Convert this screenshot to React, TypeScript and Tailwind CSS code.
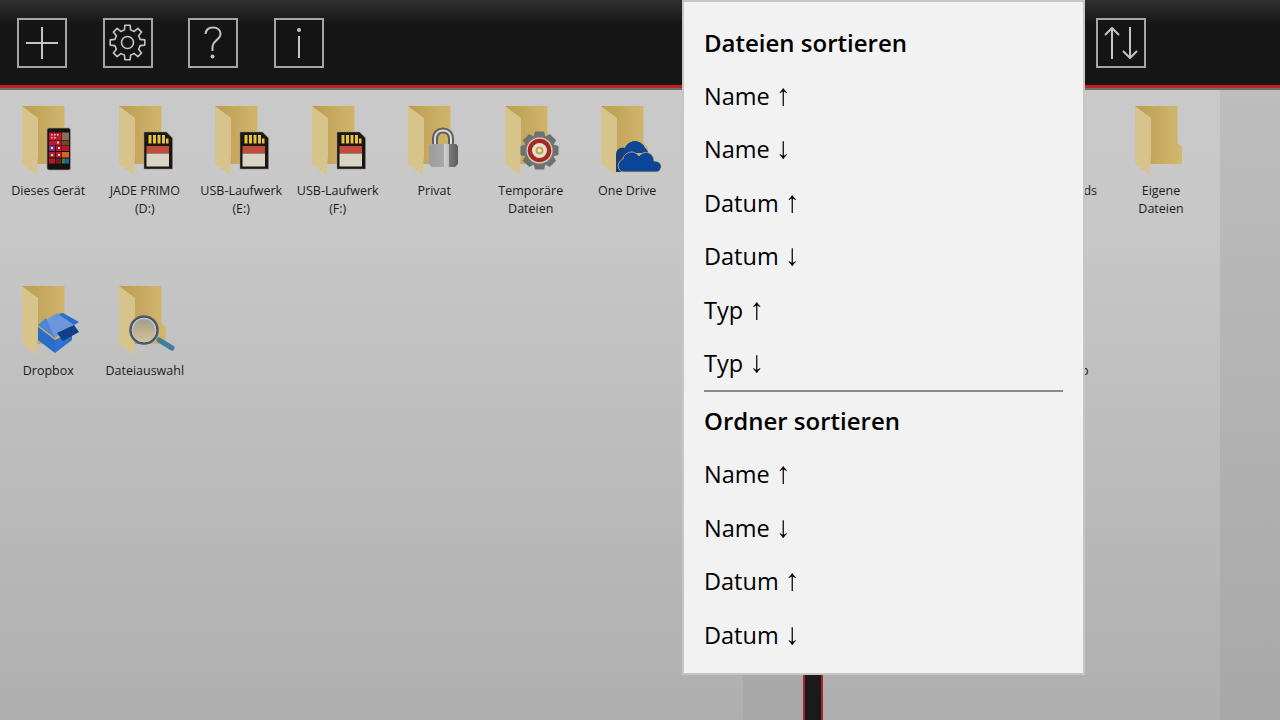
import type { ReactNode } from "react";

const segoe = "font-['Open_Sans',sans-serif]";

function Folder({ id }: { id: string }) {
  return (
    <svg width="47" height="69" viewBox="0 0 47 69" className="block">
      <defs>
        <linearGradient id={id} x1="0" x2="1" y1="0" y2="0">
          <stop offset="0" stopColor="#bc9d4e" />
          <stop offset="0.45" stopColor="#c6a95f" />
          <stop offset="1" stopColor="#d1b86f" />
        </linearGradient>
      </defs>
      <path d="M0 0H42.5V37L47 41V55.5Q47 58 45 58H14Z" fill={`url(#${id})`} />
      <path d="M0 0L16 12V50L14.5 69L0 58Z" fill="#d7c48c" />
    </svg>
  );
}

// overlays use the tile's own coordinates, folder top-left is at 22,0
function Overlay({ children }: { children: ReactNode }) {
  return (
    <svg width="96" height="80" viewBox="0 0 96 80" className="absolute left-0 top-0">
      {children}
    </svg>
  );
}

function Phone() {
  const cells = [
    ["#c2182e", 49, 26.5, 12.5, 7.5], ["#8a6d4f", 62, 26.5, 7, 7.5],
    ["#c2182e", 49, 34.5, 12.5, 4.5], ["#6d4a30", 62, 34.5, 7, 4.5],
    ["#8c2a8c", 49, 39.5, 6, 5.5], ["#c2182e", 56, 39.5, 5.5, 5.5], ["#b5172c", 62, 39.5, 7, 5.5],
    ["#c2182e", 49, 46, 6, 5.5], ["#c2182e", 56, 46, 5.5, 5.5], ["#d8641e", 62, 46, 7, 5.5],
    ["#b5172c", 49, 52.5, 6, 5], ["#7c1a22", 56, 52.5, 5.5, 5], ["#1c8f3c", 62, 52.5, 3.5, 5], ["#1d5fb0", 65.5, 52.5, 3.5, 5],
    ["#f0d8d8", 51, 28, 1.5, 1.5], ["#f0d8d8", 54, 28, 1.5, 1.5], ["#f0d8d8", 57, 28, 1.5, 1.5],
    ["#f0d8d8", 51, 31, 1.5, 1.5], ["#f0d8d8", 54, 31, 1.5, 1.5], ["#f0d8d8", 57, 35.5, 2, 2],
    ["#f0d8d8", 51, 41, 2, 2], ["#f0d8d8", 58, 41, 2, 2], ["#f0d8d8", 51, 48, 2, 2], ["#f0d8d8", 58, 48, 2, 2],
  ] as const;
  return (
    <Overlay>
      <rect x="47" y="22" width="23.5" height="42" rx="2" fill="#15120f" stroke="#9a9a9a" strokeWidth="0.7" />
      {cells.map(([c, x, y, w, h], i) => (
        <rect key={i} x={x} y={y} width={w} height={h} fill={c} />
      ))}
    </Overlay>
  );
}

function SdCard() {
  return (
    <Overlay>
      <path d="M47 26H69.5L75.5 32V63H47Z" fill="#191713" stroke="#8a8a86" strokeWidth="0.5" />
      <rect x="51.5" y="29" width="3" height="8.5" fill="#e6c53c" />
      <rect x="56" y="29" width="3" height="8.5" fill="#e6c53c" />
      <rect x="60.5" y="29" width="3" height="8.5" fill="#e6c53c" />
      <rect x="65" y="29" width="3" height="8.5" fill="#e6c53c" />
      <rect x="69" y="32.5" width="2.5" height="5" fill="#e6c53c" />
      <rect x="49.5" y="40" width="22.5" height="7.5" fill="#c24b3e" />
      <rect x="49.5" y="47.5" width="22.5" height="13" fill="#d8d4c4" />
    </Overlay>
  );
}

function Lock() {
  return (
    <Overlay>
      <defs>
        <linearGradient id="lockBody" x1="0" x2="1" y1="0" y2="0">
          <stop offset="0" stopColor="#9d9d9d" />
          <stop offset="0.5" stopColor="#a8a8a8" />
          <stop offset="0.52" stopColor="#d2d2d2" />
          <stop offset="0.68" stopColor="#bdbdbd" />
          <stop offset="0.7" stopColor="#7a7a7a" />
          <stop offset="1" stopColor="#5e5e5e" />
        </linearGradient>
      </defs>
      <path d="M49 40V33C49 27 53 24.5 57 24.5C61 24.5 65 27 65 33V40" fill="none" stroke="#5f5f5f" strokeWidth="6" />
      <path d="M49 40V33C49 27 53 24.5 57 24.5C61 24.5 65 27 65 33V40" fill="none" stroke="#dcdcdc" strokeWidth="2" />
      <path d="M43 40L46 38H70L72 40V58L69 61H46L43 58Z" fill="url(#lockBody)" />
    </Overlay>
  );
}

function Gear() {
  const teeth = [0, 45, 90, 135, 180, 225, 270, 315];
  return (
    <Overlay>
      {teeth.map((a) => (
        <path key={a} d="M52 25.5H61L63 33H50Z" fill="#6f6f6f" transform={`rotate(${a} 56.5 44.5)`} />
      ))}
      <circle cx="56.5" cy="44.5" r="15.5" fill="#757575" />
      <circle cx="56.5" cy="44.5" r="13" fill="#d9d4cc" />
      <circle cx="56.5" cy="44.5" r="11.8" fill="#a52a1e" />
      <circle cx="56.5" cy="44.5" r="7.5" fill="#e4dfd4" />
      <circle cx="56.5" cy="44.5" r="4" fill="#c9a24a" />
      <circle cx="56.5" cy="44.5" r="2" fill="#e9e3c9" />
    </Overlay>
  );
}

function Cloud() {
  return (
    <Overlay>
      <path d="M37 66V49C37 43 41 41 46 42C50 33 62 33 66 42C68 44 69 45 69 47H50L42 66Z" fill="#1a3f78" />
      <path d="M46 42C50 33 62 33 66 42L69 47L56 46L47 48Z" fill="#0d4696" />
      <path d="M45 66C38 66 37 56 44 53C45 46 55 43 60 50C66 43 75 47 75 55C80 55 83 58 82 62C81 65 79 66 77 66Z" fill="#0b4598" stroke="#d0b86f" strokeWidth="0.8" />
    </Overlay>
  );
}

function Box() {
  return (
    <Overlay>
      <path d="M38 39L57 27L74 39L55 52Z" fill="#6c97dc" />
      <path d="M63 27L79 36L74 39L58 28Z" fill="#2a6fd0" />
      <path d="M38 41L55 54V67L38 54Z" fill="#2a6cc8" />
      <path d="M55 54L72 46V54L55 67Z" fill="#2d72d2" />
      <path d="M38 39L46 32L55 52Z" fill="#4f86d8" />
      <path d="M57 47L74 39L79 46L63 55Z" fill="#123f86" />
    </Overlay>
  );
}

function Magnifier() {
  return (
    <Overlay>
      <defs>
        <linearGradient id="lens" x1="0" x2="0" y1="0" y2="1">
          <stop offset="0" stopColor="#9c9a90" />
          <stop offset="1" stopColor="#d8c48c" />
        </linearGradient>
      </defs>
      <path d="M62 54L75 62" stroke="#3e7f9e" strokeWidth="5" strokeLinecap="round" />
      <circle cx="47" cy="44" r="13.5" fill="url(#lens)" stroke="#4a5768" strokeWidth="2.5" />
      <circle cx="47" cy="44" r="11.5" fill="none" stroke="#b9bfc6" strokeWidth="1.5" />
    </Overlay>
  );
}

function Tile({ label, id, icon }: { label: ReactNode; id: string; icon?: ReactNode }) {
  return (
    <div className="h-[180px] w-[96.5px]">
      <div className="relative h-[69px] pl-[22px]">
        <Folder id={id} />
        {icon}
      </div>
      <div className={`mt-[7px] text-center text-[12.5px] leading-[18px] text-[#1c1c1c] ${segoe}`}>{label}</div>
    </div>
  );
}

function ToolButton({ children }: { children: ReactNode }) {
  return (
    <button className="flex h-[50px] w-[50px] items-center justify-center border-2 border-[#a5a5a5] bg-[#141414]">
      {children}
    </button>
  );
}

const stroke = { fill: "none", stroke: "#c4c4c4", strokeWidth: 2 };

// 8 toothed gear outline for the settings button
function gearPath(cx: number, cy: number, outer: number, root: number) {
  const pts: string[] = [];
  for (let i = 0; i < 8; i++) {
    const a = (i * Math.PI) / 4 - Math.PI / 2;
    const at = (r: number, d: number) =>
      `${(cx + r * Math.cos(a + d)).toFixed(2)} ${(cy + r * Math.sin(a + d)).toFixed(2)}`;
    pts.push(at(root, -0.24), at(outer, -0.15), at(outer, 0.15), at(root, 0.24));
  }
  return `M${pts.join("L")}Z`;
}

function MenuItem({ label, arrow }: { label: string; arrow: string }) {
  return (
    <div className="h-[53.4px] text-[23.5px] leading-[53.4px] text-black">
      {label}{" "}
      <span className="inline-block font-['Liberation_Sans',sans-serif] text-[30px] leading-[0] text-black [will-change:opacity]">{arrow}</span>
    </div>
  );
}

function SortMenu() {
  return (
    <div className={`absolute left-[682px] top-0 h-[675px] w-[403px] border-2 border-[#c6c6c6] bg-[#f2f2f2] px-[20px] pt-[15px] ${segoe}`}>
      <div className="h-[53px] text-[24px] font-semibold leading-[52px] text-black">Dateien sortieren</div>
      <MenuItem label="Name" arrow="↑" />
      <MenuItem label="Name" arrow="↓" />
      <MenuItem label="Datum" arrow="↑" />
      <MenuItem label="Datum" arrow="↓" />
      <MenuItem label="Typ" arrow="↑" />
      <MenuItem label="Typ" arrow="↓" />
      <div className="border-t-2 border-[#8a8a8a]" />
      <div className="h-[56px] text-[24px] font-semibold leading-[57px] text-black">Ordner sortieren</div>
      <MenuItem label="Name" arrow="↑" />
      <MenuItem label="Name" arrow="↓" />
      <MenuItem label="Datum" arrow="↑" />
      <MenuItem label="Datum" arrow="↓" />
    </div>
  );
}

export default function App() {
  return (
    <div className="relative flex h-[720px] w-[1280px] flex-col overflow-hidden bg-[#bdbdbd]">
      <header className="h-[90px] shrink-0 border-b-2 border-[#6e6e6e]">
        <div className="flex h-[88px] items-center justify-between border-b-[3px] border-[#c2201f] bg-[linear-gradient(#303030,#161616_28%,#161616)] pl-[17px] pr-[134px]">
          <div className="flex gap-[35.5px]">
            <ToolButton>
              <svg width="32" height="32" viewBox="0 0 32 32" {...stroke}>
                <path d="M0 16H32M16 0V32" />
              </svg>
            </ToolButton>
            <ToolButton>
              <svg width="37" height="37" viewBox="0 0 37 37" fill="none" stroke="#c4c4c4" strokeWidth="1.6" strokeLinejoin="round">
                <path d={gearPath(18.5, 18.5, 17.5, 13)} />
                <circle cx="18.5" cy="18.5" r="6" />
              </svg>
            </ToolButton>
            <ToolButton>
              <svg width="18" height="33" viewBox="0 0 18 33" {...stroke}>
                <path d="M1.5 8C2 3.5 5 1.5 9 1.5C13.5 1.5 16.5 4 16.5 8C16.5 13.5 8.5 14.5 8.5 21V25" />
                <circle cx="8.5" cy="30.5" r="2" fill="#c4c4c4" stroke="none" />
              </svg>
            </ToolButton>
            <ToolButton>
              <svg width="10" height="32" viewBox="0 0 10 32" {...stroke}>
                <circle cx="5" cy="3" r="2" fill="#c4c4c4" stroke="none" />
                <path d="M5 9V31" />
              </svg>
            </ToolButton>
          </div>
          <ToolButton>
            <svg width="34" height="32" viewBox="0 0 34 32" {...stroke}>
              <path d="M8 32V1M1 8L8 1l7 7M26 0V31M19 24L26 31l7-7" />
            </svg>
          </ToolButton>
        </div>
      </header>

      <main className="flex min-h-0 flex-1">
        <section className="w-[743px] bg-[linear-gradient(#c9c9c9,#c8c8c8_20%,#afafaf)] pt-[16px]">
          <div className="flex flex-wrap">
            <Tile id="f1" label="Dieses Gerät" icon={<Phone />} />
            <Tile id="f2" label={<>JADE PRIMO<br />(D:)</>} icon={<SdCard />} />
            <Tile id="f3" label={<>USB-Laufwerk<br />(E:)</>} icon={<SdCard />} />
            <Tile id="f4" label={<>USB-Laufwerk<br />(F:)</>} icon={<SdCard />} />
            <Tile id="f5" label="Privat" icon={<Lock />} />
            <Tile id="f6" label={<>Temporäre<br />Dateien</>} icon={<Gear />} />
            <Tile id="f7" label="One Drive" icon={<Cloud />} />
            <Tile id="f8" label="Dropbox" icon={<Box />} />
            <Tile id="f9" label="Dateiauswahl" icon={<Magnifier />} />
          </div>
        </section>
        <div className="w-[60px] bg-[linear-gradient(#bdbdbd,#a8a8a8)]" />
        <div className="w-[20px] border-x-2 border-[#a8262a] bg-[#1a1a1a]" />
        <section className="flex w-[397px] justify-end bg-[linear-gradient(#c9c9c9,#c8c8c8_20%,#afafaf)] pr-[10.75px] pt-[16px]">
          <div className="flex w-[193px] flex-wrap content-start">
            <Tile id="f10" label="Downloads" />
            <Tile id="f11" label={<>Eigene<br />Dateien</>} />
            <Tile id="f12" label="Desktop" />
          </div>
        </section>
        <div className="w-[60px] bg-[linear-gradient(#bdbdbd,#a8a8a8)]" />
      </main>

      <SortMenu />
    </div>
  );
}
